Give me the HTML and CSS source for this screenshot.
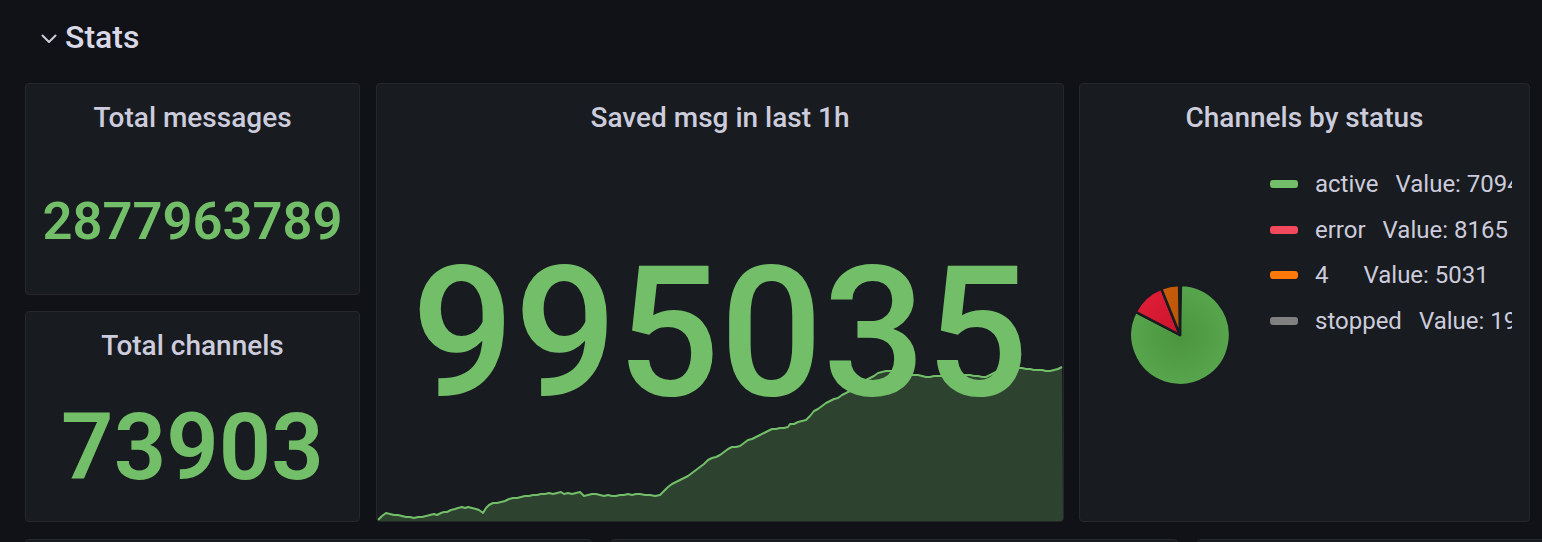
FILE: index.html
```html
<!DOCTYPE html>
<html lang="en">
<head>
<meta charset="utf-8">
<title>Stats</title>
<link rel="stylesheet" href="styles.css">
</head>
<body>
<div class="dashboard">
  <div class="row-header">
    <svg class="chevron" width="16" height="10" viewBox="0 0 16 10"><polyline points="1.5,1.5 8,8 14.5,1.5" fill="none" stroke="#ccccdc" stroke-width="2" stroke-linecap="round" stroke-linejoin="round"/></svg>
    <span class="row-title">Stats</span>
  </div>

  <div class="row-top">
    <div class="col-left">
      <section class="panel">
        <h2 class="panel-title">Total messages</h2>
        <div class="stat-body"><span class="stat-value stat-value--md">2877963789</span></div>
      </section>
      <section class="panel">
        <h2 class="panel-title">Total channels</h2>
        <div class="stat-body"><span class="stat-value stat-value--lg">73903</span></div>
      </section>
    </div>

    <section class="panel panel-graph">
      <svg class="sparkline" width="686" height="180" viewBox="377 341 686 180" preserveAspectRatio="none">
        <polygon class="spark-fill" points="377,521 378,520 382,516 386,513 390,514 394,515 398,515 402,516 406,517 410,517 414,518 418,517 422,517 426,516 430,515 434,514 437,515 441,513 444,512 447,512 451,510 455,509 458,508 462,507 465,508 468,507 472,508 476,509 479,510 483,513 486,508 489,505 493,503 497,503 501,502 505,501 509,499 513,498 517,498 521,497 525,496 529,496 533,495 537,495 541,494 545,494 549,493 553,494 557,493 561,492 564,494 568,493 572,494 576,493 580,492 584,496 588,495 592,494 596,494 600,495 604,496 608,495 612,496 616,496 620,495 624,495 628,494 632,495 636,494 640,494 645,495 650,495 655,496 660,495 664,491 668,487 672,484 676,482 680,480 684,478 688,476 692,473 696,470 700,467 704,464 708,460 712,458 716,457 720,455 724,452 728,449 732,447 736,447 740,446 744,443 748,440 752,439 756,437 760,435 764,433 768,431 772,429 776,429 780,428 784,428 788,427 790,424 794,424 798,422 802,421 806,420 810,416 814,411 818,409 822,406 826,403 830,401 834,399 838,398 842,395 846,393 850,391 854,389 858,386 862,383 866,380 870,378 874,376 878,373 882,372 886,371 890,371 894,371 898,372 902,372 906,374 910,375 914,375 918,375 922,376 926,377 930,377 934,376 938,376 942,376 946,375 950,375 954,375 958,376 962,375 966,375 970,375 974,376 978,376 982,377 986,377 990,375 994,373 998,371 1002,371 1006,370 1010,369 1014,369 1018,368 1022,368 1026,369 1030,369 1034,370 1038,370 1042,370 1046,371 1050,371 1054,370 1058,369 1062,367 1063,521"/>
        <polyline class="spark-line" points="378,520 382,516 386,513 390,514 394,515 398,515 402,516 406,517 410,517 414,518 418,517 422,517 426,516 430,515 434,514 437,515 441,513 444,512 447,512 451,510 455,509 458,508 462,507 465,508 468,507 472,508 476,509 479,510 483,513 486,508 489,505 493,503 497,503 501,502 505,501 509,499 513,498 517,498 521,497 525,496 529,496 533,495 537,495 541,494 545,494 549,493 553,494 557,493 561,492 564,494 568,493 572,494 576,493 580,492 584,496 588,495 592,494 596,494 600,495 604,496 608,495 612,496 616,496 620,495 624,495 628,494 632,495 636,494 640,494 645,495 650,495 655,496 660,495 664,491 668,487 672,484 676,482 680,480 684,478 688,476 692,473 696,470 700,467 704,464 708,460 712,458 716,457 720,455 724,452 728,449 732,447 736,447 740,446 744,443 748,440 752,439 756,437 760,435 764,433 768,431 772,429 776,429 780,428 784,428 788,427 790,424 794,424 798,422 802,421 806,420 810,416 814,411 818,409 822,406 826,403 830,401 834,399 838,398 842,395 846,393 850,391 854,389 858,386 862,383 866,380 870,378 874,376 878,373 882,372 886,371 890,371 894,371 898,372 902,372 906,374 910,375 914,375 918,375 922,376 926,377 930,377 934,376 938,376 942,376 946,375 950,375 954,375 958,376 962,375 966,375 970,375 974,376 978,376 982,377 986,377 990,375 994,373 998,371 1002,371 1006,370 1010,369 1014,369 1018,368 1022,368 1026,369 1030,369 1034,370 1038,370 1042,370 1046,371 1050,371 1054,370 1058,369 1062,367"/>
      </svg>
      <h2 class="panel-title">Saved msg in last 1h</h2>
      <div class="stat-body stat-body--graph"><span class="stat-value stat-value--xl">995035</span></div>
    </section>

    <section class="panel panel-pie">
      <h2 class="panel-title">Channels by status</h2>
      <div class="pie-body">
        <div class="pie-wrap">
          <svg width="110" height="110" viewBox="-55 -55 110 110">
            <defs>
              <radialGradient id="gGreen" cx="0" cy="0" r="50" gradientUnits="userSpaceOnUse">
                <stop offset="0" stop-color="#4b953f"/>
                <stop offset="1" stop-color="#57a54c"/>
              </radialGradient>
              <linearGradient id="gRed" x1="0" y1="0" x2="1" y2="1">
                <stop offset="0" stop-color="#e4203a"/>
                <stop offset="1" stop-color="#c9142b"/>
              </linearGradient>
              <linearGradient id="gOrange" x1="0" y1="0" x2="1" y2="1">
                <stop offset="0" stop-color="#c85e0c"/>
                <stop offset="1" stop-color="#b95408"/>
              </linearGradient>
            </defs>
            <path d="M0,0 L0.9,-49.99 A50,50 0 1 1 -44.3,-23.2 Z" fill="url(#gGreen)" stroke="#181b1f" stroke-width="2.5" stroke-linejoin="round"/>
            <path d="M0,0 L-44.3,-23.2 A50,50 0 0 1 -18.7,-46.4 Z" fill="url(#gRed)" stroke="#181b1f" stroke-width="2.5" stroke-linejoin="round"/>
            <path d="M0,0 L-18.7,-46.4 A50,50 0 0 1 -0.9,-49.99 Z" fill="url(#gOrange)" stroke="#181b1f" stroke-width="2.5" stroke-linejoin="round"/>
          </svg>
        </div>
        <ul class="legend">
          <li class="legend-item"><span class="legend-marker legend-marker--green"></span><span class="legend-name">active</span><span class="legend-value">Value: 70943</span></li>
          <li class="legend-item"><span class="legend-marker legend-marker--red"></span><span class="legend-name">error</span><span class="legend-value">Value: 8165</span></li>
          <li class="legend-item"><span class="legend-marker legend-marker--orange"></span><span class="legend-name legend-name--wide">4</span><span class="legend-value">Value: 5031</span></li>
          <li class="legend-item"><span class="legend-marker legend-marker--gray"></span><span class="legend-name">stopped</span><span class="legend-value">Value: 1924</span></li>
        </ul>
      </div>
    </section>
  </div>

  <div class="row-bottom">
    <section class="panel panel-stub"></section>
    <section class="panel panel-stub"></section>
    <section class="panel panel-stub"></section>
  </div>
</div>
</body>
</html>
```

FILE: styles.css
```css
* { box-sizing: border-box; }

html, body {
  margin: 0;
  padding: 0;
  height: 542px;
  overflow: hidden;
  background: #111217;
  font-family: Roboto, "Liberation Sans", sans-serif;
  color: #ccccdc;
}

.dashboard {
  padding: 17px 0 0 25px;
}

.row-header {
  display: flex;
  align-items: center;
  height: 40px;
  padding-left: 16px;
}

.chevron {
  margin-top: 4px;
  margin-right: 8px;
  flex: none;
}

.row-title {
  font-size: 32px;
  font-weight: 500;
  line-height: 40px;
  color: #d8d8e6;
}

.row-top {
  margin-top: 26px;
  display: grid;
  grid-template-columns: 335px 688px 450px;
  column-gap: 16px;
  height: 439px;
}

.col-left {
  display: flex;
  flex-direction: column;
  gap: 16px;
}

.col-left .panel { flex: 1; }

.panel {
  position: relative;
  background: #181b1f;
  border: 1px solid #25272d;
  border-radius: 4px;
  display: flex;
  flex-direction: column;
  overflow: hidden;
}

.panel-pie {
  margin-left: -1px;
}

.panel-title {
  margin: 0;
  padding-top: 14px;
  height: 54px;
  flex: none;
  font-size: 28px;
  line-height: 40px;
  font-weight: 500;
  text-align: center;
  color: #ccccdc;
  white-space: nowrap;
  position: relative;
}

.stat-body {
  flex: 1;
  display: flex;
  align-items: center;
  justify-content: center;
  padding-top: 10px;
  position: relative;
}

.stat-body--graph {
  padding-top: 8px;
}

.stat-value {
  color: #73bf69;
  font-weight: 600;
  line-height: 1;
  white-space: nowrap;
}

.stat-value--md { font-size: 52.5px; }
.stat-value--lg { font-size: 92px; }
.stat-value--xl { font-size: 181px; font-weight: 500; }

.sparkline {
  position: absolute;
  left: 0;
  bottom: 0;
  display: block;
}

.spark-fill {
  fill: rgba(115, 191, 105, 0.24);
  stroke: none;
}

.spark-line {
  fill: none;
  stroke: #73bf69;
  stroke-width: 2;
  stroke-linejoin: round;
}

.pie-body {
  flex: 1;
  display: flex;
  padding-left: 10px;
}

.pie-wrap {
  width: 180px;
  flex: none;
  display: flex;
  align-items: center;
  justify-content: center;
  padding-top: 10px;
}

.pie-wrap svg { display: block; }

.legend {
  list-style: none;
  margin: 0;
  padding: 23px 0 0 0;
  width: 242px;
  overflow: hidden;
}

.legend-item {
  display: flex;
  align-items: center;
  height: 45.7px;
  font-size: 24px;
  white-space: nowrap;
  color: #ccccdc;
}

.legend-marker {
  flex: none;
  width: 28px;
  height: 8px;
  border-radius: 3px;
  margin-right: 17px;
}

.legend-marker--green { background: #73bf69; }
.legend-marker--red { background: #f2495c; }
.legend-marker--orange { background: #ff780a; }
.legend-marker--gray { background: #808080; }

.legend-name {
  margin-right: 17px;
}

.legend-name--wide {
  margin-right: 35px;
}

.row-bottom {
  margin-top: 17px;
  display: flex;
  gap: 19px;
  height: 40px;
  overflow: hidden;
}

.panel-stub {
  flex: none;
  width: 567px;
  height: 60px;
}
```
